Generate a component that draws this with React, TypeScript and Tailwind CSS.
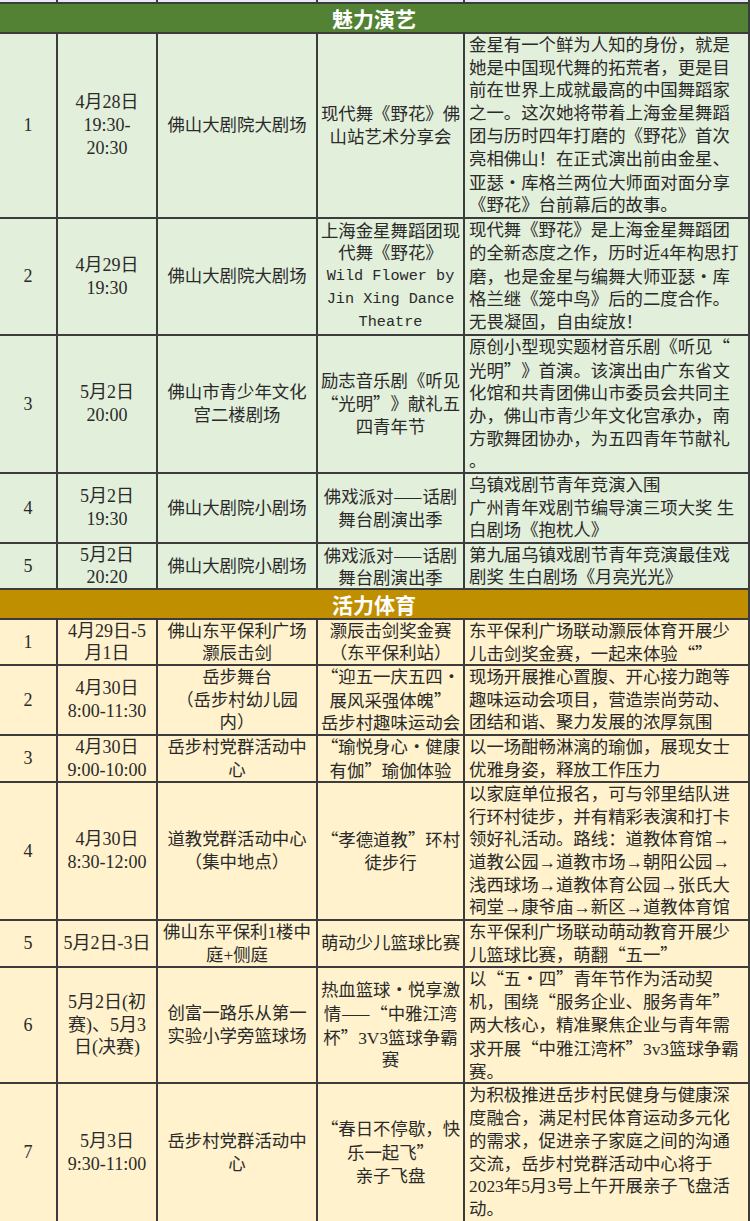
type Row = {
  h: string;
  lead?: string;
  no: string;
  date: string[];
  place: string[];
  name: string[];
  desc: string[];
};

const show: Row[] = [
  {
    h: "h-[183px]",
    no: "1",
    date: ["4月28日", "19:30-", "20:30"],
    place: ["佛山大剧院大剧场"],
    name: ["现代舞《野花》佛", "山站艺术分享会"],
    desc: [
      "金星有一个鲜为人知的身份，就是",
      "她是中国现代舞的拓荒者，更是目",
      "前在世界上成就最高的中国舞蹈家",
      "之一。这次她将带着上海金星舞蹈",
      "团与历时四年打磨的《野花》首次",
      "亮相佛山！在正式演出前由金星、",
      "亚瑟·库格兰两位大师面对面分享",
      "《野花》台前幕后的故事。",
    ],
  },
  {
    h: "h-[115px]",
    no: "2",
    date: ["4月29日", "19:30"],
    place: ["佛山大剧院大剧场"],
    name: ["上海金星舞蹈团现", "代舞《野花》", "Wild Flower by", "Jin Xing Dance", "Theatre"],
    desc: [
      "现代舞《野花》是上海金星舞蹈团",
      "的全新态度之作，历时近4年构思打",
      "磨，也是金星与编舞大师亚瑟·库",
      "格兰继《笼中鸟》后的二度合作。",
      "无畏凝固，自由绽放！",
    ],
  },
  {
    h: "h-[136px]",
    lead: "leading-[22.6px]",
    no: "3",
    date: ["5月2日", "20:00"],
    place: ["佛山市青少年文化", "宫二楼剧场"],
    name: ["励志音乐剧《听见", "“光明”》献礼五", "四青年节"],
    desc: [
      "原创小型现实题材音乐剧《听见“",
      "光明”》首演。该演出由广东省文",
      "化馆和共青团佛山市委员会共同主",
      "办，佛山市青少年文化宫承办，南",
      "方歌舞团协办，为五四青年节献礼",
      "。",
    ],
  },
  {
    h: "h-[68px]",
    lead: "leading-[22.6px]",
    no: "4",
    date: ["5月2日", "19:30"],
    place: ["佛山大剧院小剧场"],
    name: ["佛戏派对——话剧", "舞台剧演出季"],
    desc: ["乌镇戏剧节青年竞演入围", "广州青年戏剧节编导演三项大奖 生", "白剧场《抱枕人》"],
  },
  {
    h: "h-[44px]",
    lead: "leading-[22px]",
    no: "5",
    date: ["5月2日", "20:20"],
    place: ["佛山大剧院小剧场"],
    name: ["佛戏派对——话剧", "舞台剧演出季"],
    desc: ["第九届乌镇戏剧节青年竞演最佳戏", "剧奖 生白剧场《月亮光光》"],
  },
];

const sport: Row[] = [
  {
    h: "h-[44px]",
    lead: "leading-[22px]",
    no: "1",
    date: ["4月29日-5", "月1日"],
    place: ["佛山东平保利广场", "灏辰击剑"],
    name: ["灏辰击剑奖金赛", "（东平保利站）"],
    desc: ["东平保利广场联动灏辰体育开展少", "儿击剑奖金赛，一起来体验“”"],
  },
  {
    h: "h-[68px]",
    lead: "leading-[22.6px]",
    no: "2",
    date: ["4月30日", "8:00-11:30"],
    place: ["岳步舞台", "（岳步村幼儿园", "内）"],
    name: ["“迎五一庆五四·", "展风采强体魄”", "岳步村趣味运动会"],
    desc: [
      "现场开展推心置腹、开心接力跑等",
      "趣味运动会项目，营造崇尚劳动、",
      "团结和谐、聚力发展的浓厚氛围",
    ],
  },
  {
    h: "h-[45px]",
    lead: "leading-[22.5px]",
    no: "3",
    date: ["4月30日", "9:00-10:00"],
    place: ["岳步村党群活动中", "心"],
    name: ["“瑜悦身心·健康", "有伽”瑜伽体验"],
    desc: ["以一场酣畅淋漓的瑜伽，展现女士", "优雅身姿，释放工作压力"],
  },
  {
    h: "h-[136px]",
    lead: "leading-[22.6px]",
    no: "4",
    date: ["4月30日", "8:30-12:00"],
    place: ["道教党群活动中心", "（集中地点）"],
    name: ["“孝德道教”环村", "徒步行"],
    desc: [
      "以家庭单位报名，可与邻里结队进",
      "行环村徒步，并有精彩表演和打卡",
      "领好礼活动。路线：道教体育馆→",
      "道教公园→道教市场→朝阳公园→",
      "浅西球场→道教体育公园→张氏大",
      "祠堂→康爷庙→新区→道教体育馆",
    ],
  },
  {
    h: "h-[45px]",
    lead: "leading-[22.5px]",
    no: "5",
    date: ["5月2日-3日"],
    place: ["佛山东平保利1楼中", "庭+侧庭"],
    name: ["萌动少儿篮球比赛"],
    desc: ["东平保利广场联动萌动教育开展少", "儿篮球比赛，萌翻“五一”"],
  },
  {
    h: "h-[114px]",
    no: "6",
    date: ["5月2日(初", "赛)、5月3", "日(决赛)"],
    place: ["创富一路乐从第一", "实验小学旁篮球场"],
    name: ["热血篮球·悦享激", "情——“中雅江湾", "杯”3V3篮球争霸", "赛"],
    desc: [
      "以“五·四”青年节作为活动契",
      "机，围绕“服务企业、服务青年”",
      "两大核心，精准聚焦企业与青年需",
      "求开展“中雅江湾杯”3v3篮球争霸",
      "赛。",
    ],
  },
  {
    h: "h-[137px]",
    no: "7",
    date: ["5月3日", "9:30-11:00"],
    place: ["岳步村党群活动中", "心"],
    name: ["“春日不停歇，快", "乐一起飞”", "亲子飞盘"],
    desc: [
      "为积极推进岳步村民健身与健康深",
      "度融合，满足村民体育运动多元化",
      "的需求，促进亲子家庭之间的沟通",
      "交流，岳步村党群活动中心将于",
      "2023年5月3号上午开展亲子飞盘活",
      "动。",
    ],
  },
];

// quotes, dots and dashes take the full-width CJK glyph, like the sheet's SimSun
function Line({ text }: { text: string }) {
  const parts = text.split(/([“”·]|—+)/).filter((p) => p !== "");
  return (
    <>
      {parts.map((p, i) =>
        /^([“”·]|—+)$/.test(p) ? (
          <span key={i} className="inline-block font-['Noto_Sans_CJK_SC',sans-serif]">
            {p}
          </span>
        ) : (
          <span key={i}>{p}</span>
        ),
      )}
    </>
  );
}

function Lines({ lines }: { lines: string[] }) {
  return (
    <div>
      {lines.map((l, i) => (
        <div
          key={i}
          className={
            /^[A-Za-z ]+$/.test(l)
              ? "whitespace-pre font-['Liberation_Mono',monospace] text-[15.2px]"
              : "whitespace-pre"
          }
        >
          <Line text={l} />
        </div>
      ))}
    </div>
  );
}

function TableRow({ row, bg }: { row: Row; bg: string }) {
  const cell = `${bg} flex items-center overflow-hidden`;
  return (
    <div
      className={`grid grid-cols-[56px_98px_158px_145px_283px] gap-x-[2px] ${row.h} ${row.lead ?? ""}`}
    >
      <div className={`${cell} justify-center text-[18px]`}>{row.no}</div>
      <div className={`${cell} justify-center text-center text-[18px]`}>
        <Lines lines={row.date} />
      </div>
      <div className={`${cell} justify-center text-center`}>
        <Lines lines={row.place} />
      </div>
      <div className={`${cell} justify-center text-center`}>
        <Lines lines={row.name} />
      </div>
      <div className={`${cell} justify-start pl-[4px]`}>
        <Lines lines={row.desc} />
      </div>
    </div>
  );
}

function SectionTitle({ title, bg }: { title: string; bg: string }) {
  return (
    <div
      className={`${bg} flex h-[28px] items-center justify-center font-['Noto_Sans_CJK_SC',sans-serif] text-[21px] font-bold text-white`}
    >
      {title}
    </div>
  );
}

export default function App() {
  return (
    <div className="flex w-[750px] flex-col gap-[2px] bg-[#3c3c3c] pr-[2px] font-['Liberation_Serif','Noto_Sans_CJK_SC',serif] text-[17.4px] leading-[22.8px] text-[#2a2a2a]">
      <div className="grid h-[2px] grid-cols-[56px_98px_158px_145px_283px] gap-x-[2px]">
        <div className="bg-[#e6e8f4]" />
        <div className="bg-[#e6e8f4]" />
        <div className="bg-[#e6e8f4]" />
        <div className="bg-[#e6e8f4]" />
        <div className="bg-[#e6e8f4]" />
      </div>
      <SectionTitle title="魅力演艺" bg="bg-[#548235]" />
      {show.map((r) => (
        <TableRow key={"s" + r.no} row={r} bg="bg-[#e2efda]" />
      ))}
      <SectionTitle title="活力体育" bg="bg-[#bf8f00]" />
      {sport.map((r) => (
        <TableRow key={"p" + r.no} row={r} bg="bg-[#fff2cc]" />
      ))}
    </div>
  );
}
